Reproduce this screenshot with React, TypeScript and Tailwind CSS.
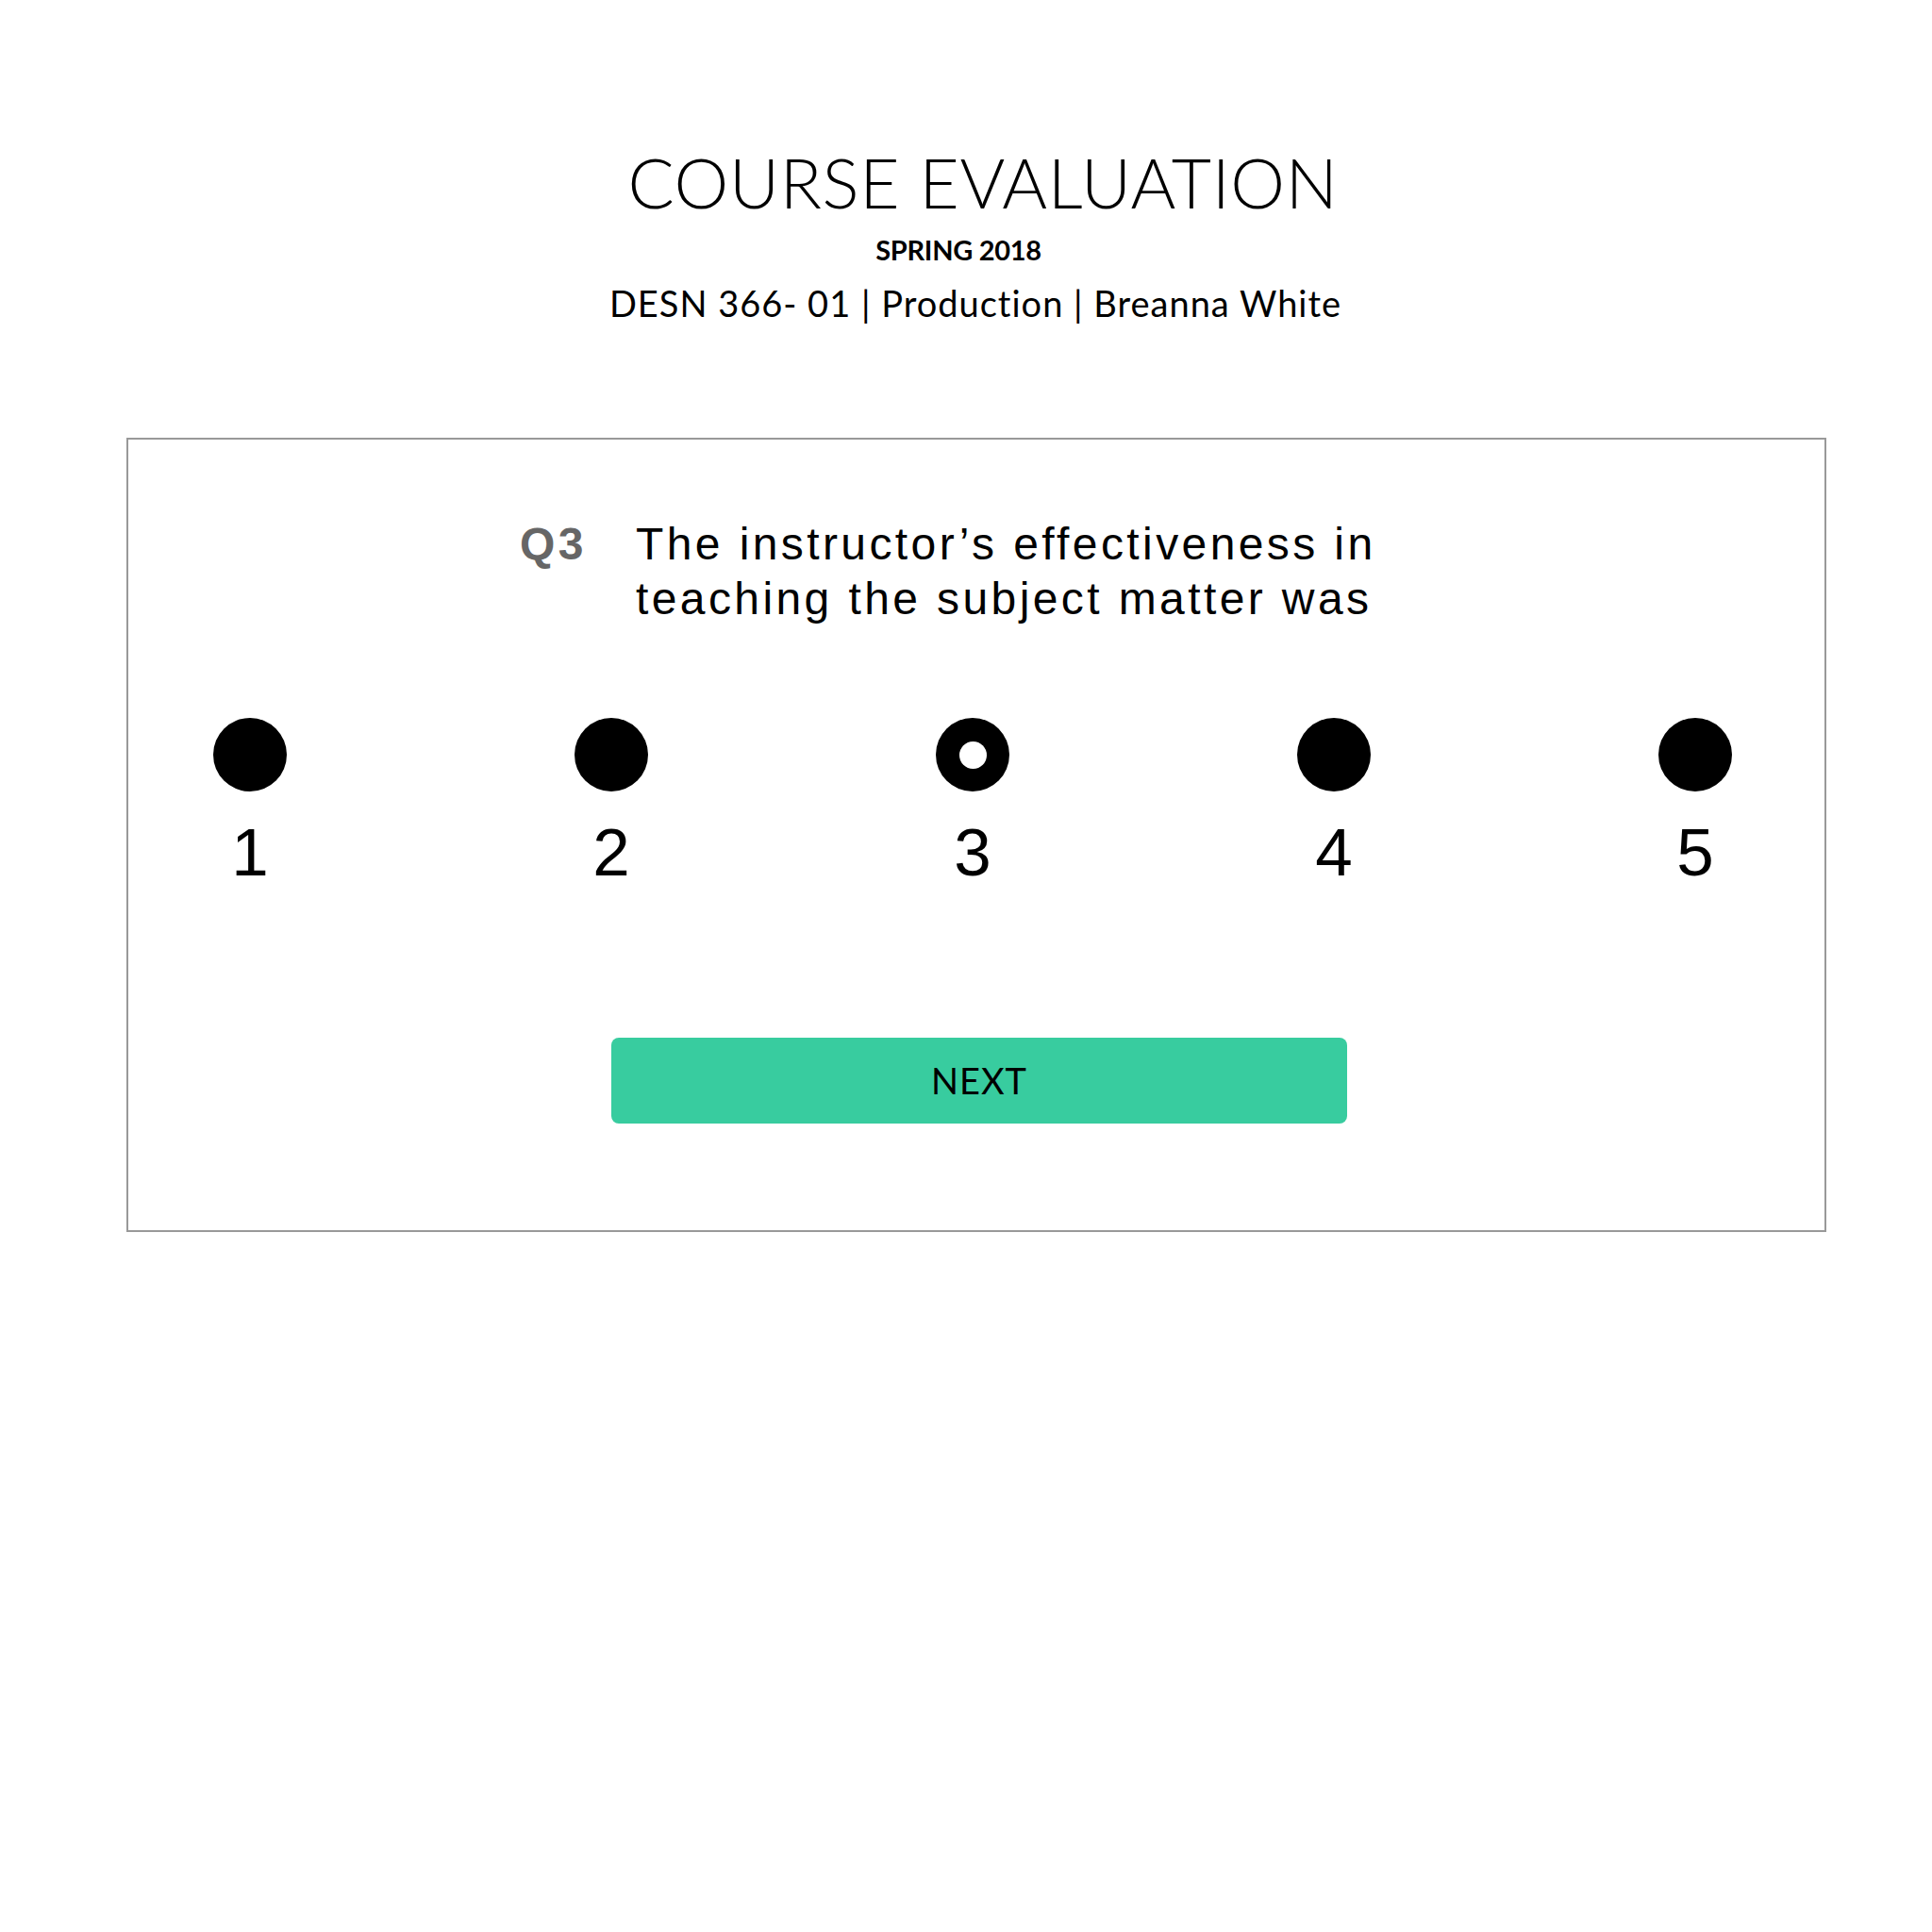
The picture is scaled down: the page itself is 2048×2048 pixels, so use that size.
export default function App() {
  const options = [1, 2, 3, 4, 5]
  const selected = 3

  return (
    <div className="min-h-screen w-[2048px] bg-white text-black">
      {/* Header */}
      <header className="flex flex-col items-center pt-[157px] font-['Lato',sans-serif]">
        <h1 className="pl-[36px] text-[73px] leading-[73px] font-light tracking-[0.6px]">COURSE EVALUATION</h1>
        <p className="mt-[20px] pr-[16px] text-[29px] leading-[30px] font-bold tracking-[-0.3px]">SPRING 2018</p>
        <p className="mt-[22px] pl-[20px] text-[38px] leading-[38px] tracking-[1px]">
          DESN 366- 01 | Production | Breanna White
        </p>
      </header>

      {/* Question card */}
      <section className="ml-[134px] mt-[124px] w-[1802px] border-2 border-[#999999] pt-[82px] pb-[113px]">
        <div className="ml-[415px] flex font-['Liberation_Sans',Arial,sans-serif] text-[48px] leading-[58px] tracking-[3.4px]">
          <span className="w-[123px] shrink-0 font-bold text-[#666666]">Q3</span>
          <p>
            The instructor’s effectiveness in
            <br />
            teaching the subject matter was
          </p>
        </div>

        <div className="mt-[97px] flex justify-between pl-[90px] pr-[98px]">
          {options.map(n => (
            <button key={n} className="flex w-[78px] flex-col items-center">
              <span className="flex h-[78px] w-[78px] items-center justify-center rounded-full bg-black">
                {n === selected && <span className="h-[29px] w-[29px] rounded-full bg-white" />}
              </span>
              <span className="mt-[29px] font-['Liberation_Sans',Arial,sans-serif] text-[71px] leading-[71px]">{n}</span>
            </button>
          ))}
        </div>

        <button className="mt-[161px] ml-[512px] flex h-[91px] w-[780px] items-center justify-center rounded-[8px] bg-[#38cc9f] font-['Lato',sans-serif] text-[38px] tracking-[1px]">
          NEXT
        </button>
      </section>
    </div>
  )
}
